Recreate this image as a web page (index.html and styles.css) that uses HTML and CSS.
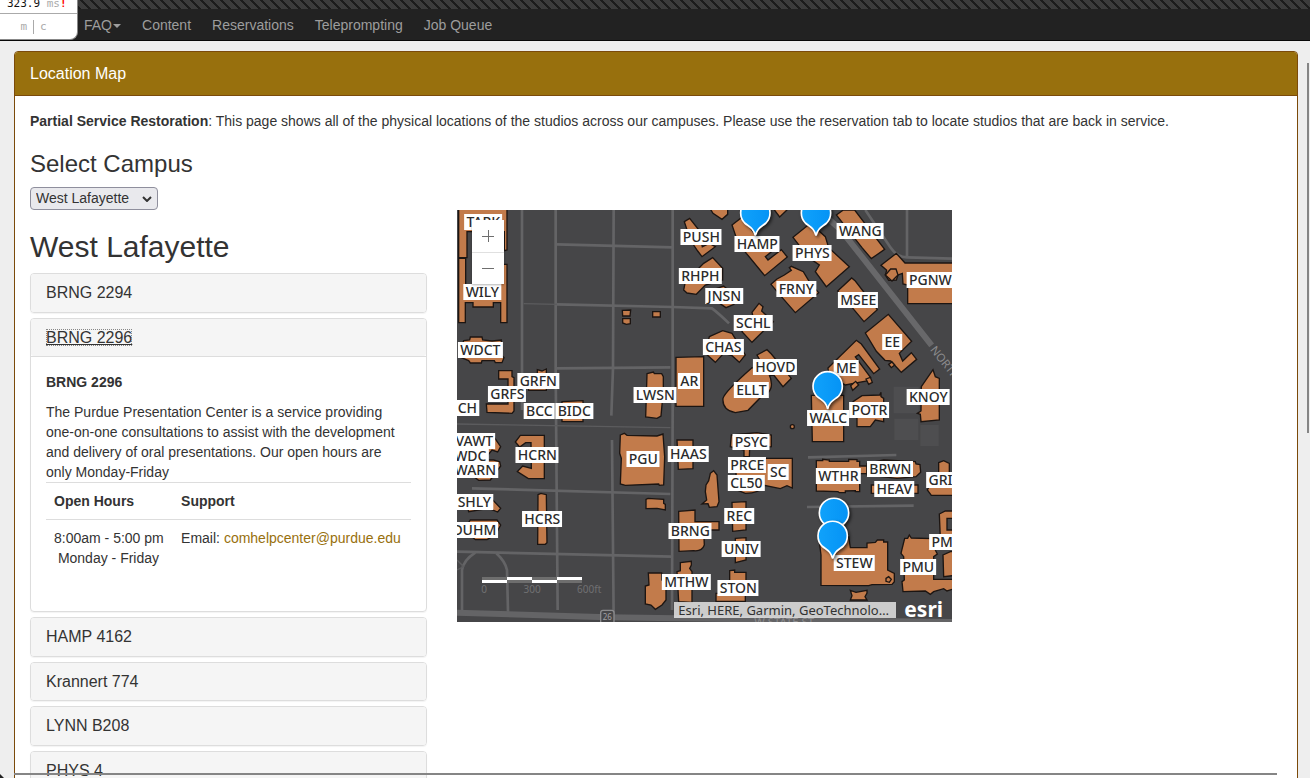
FILE: index.html
```html
<!DOCTYPE html>
<html lang="en">
<head>
<meta charset="utf-8">
<title>Location Map</title>
<link rel="stylesheet" href="styles.css">
</head>
<body>
<header class="topbar">
  <div class="stripes"></div>
  <nav class="nav">
    <a class="dropdown" href="#">FAQ<span class="caret"></span></a>
    <a href="#">Content</a>
    <a href="#">Reservations</a>
    <a href="#">Teleprompting</a>
    <a href="#">Job Queue</a>
  </nav>
  <div class="profiler">
    <div class="timing">323.9 <span class="unit">ms</span><b>!</b></div>
    <div class="toggles"><span>m</span><span class="sep"></span><span>c</span></div>
  </div>
</header>

<main class="panel">
  <h1 class="panel-title">Location Map</h1>
  <div class="panel-body">
    <p><strong>Partial Service Restoration</strong>: This page shows all of the physical locations of the studios across our campuses. Please use the reservation tab to locate studios that are back in service.</p>
    <h3><label for="campus">Select Campus</label></h3>
    <div class="campus-box">
      <select id="campus" class="campus"><option>West Lafayette</option></select>
      <svg class="chevron" viewBox="0 0 10 6"><path d="M1 1L5 5L9 1"/></svg>
    </div>
    <div class="columns">
      <section class="studios">
        <h2>West Lafayette</h2>
        <div class="card"><h4><a href="#">BRNG 2294</a></h4></div>
        <div class="card">
          <h4><a class="active" href="#">BRNG 2296</a></h4>
          <div class="card-body">
            <p><strong>BRNG 2296</strong></p>
            <div>The Purdue Presentation Center is a service providing one-on-one consultations to assist with the development and delivery of oral presentations. Our open hours are<br>only Monday-Friday</div>
            <table class="hours">
              <thead><tr><th>Open Hours</th><th>Support</th></tr></thead>
              <tbody><tr><td>8:00am - 5:00 pm<br>&nbsp;Monday - Friday</td><td>Email: <a href="#">comhelpcenter@purdue.edu</a></td></tr></tbody>
            </table>
          </div>
        </div>
        <div class="card"><h4><a href="#">HAMP 4162</a></h4></div>
        <div class="card"><h4><a href="#">Krannert 774</a></h4></div>
        <div class="card"><h4><a href="#">LYNN B208</a></h4></div>
        <div class="card"><h4><a href="#">PHYS 4</a></h4></div>
      </section>

      <section class="map" aria-label="Campus map">
        <svg class="layer" viewBox="0 0 1485 1236">
          <g class="roads">
            <path d="M195 0V600M296 0V480L302 1200M470 0L468 475L463 617M465 690L470 1225M647 0V600L645 1200"/>
            <path d="M300 103L647 112M300 283L647 291L765 295Q785 310 816 340M300 475L640 472"/>
            <path class="thin" d="M200 281L300 283M0 642L640 653"/>
            <path d="M45 835L640 852M0 1025L645 1040"/>
            <path d="M15 1200V1080Q20 1050 55 1028M153 1205L150 1080Q145 1055 118 1030"/>
            <path class="thin" d="M0 1050L20 1070L0 1080"/>
            <path d="M1350 0V138M1225 0L1300 112Q1320 142 1350 142L1485 146M1053 742L1318 735M1050 891L1370 887"/>
            <path class="main" d="M0 1208L450 1222L1485 1236"/>
            <path class="avenue" d="M1112 25L1150 58L1424 406"/>
          </g>
          <g class="blocks"><path d="M1310 530H1385V610H1310ZM1390 645H1445V708H1390ZM1312 626H1384V690H1312Z"/></g>
          <g class="buildings">
            <g transform="translate(0 -15)">
              <path d="M5 12H150V135L142 137V80H30V158H5ZM5 160H26V240H128V178H150V353H131V293H109V306H48V293H25V353H5Z"/>
              <path d="M20 407L38 405L40 396H75L77 405L105 408L133 405V450L141 458L135 473H115L112 467H75L73 474H40L35 467L5 455Z"/>
              <path d="M125 497H165V515L171 518V618L165 625L90 622L88 597H153V522H125Z"/>
              <path d="M241 494L255 498L268 492V556H215V520H241Z"/>
              <path d="M315 590L378 587V650H315Z"/>
              <path d="M496 316L521 315L519 333H497ZM497 341H520V356L508 358L497 354ZM587 320H610V336H587Z"/>
              <path d="M570 506L589 501L592 506H614L619 515V555L612 633L600 640L566 636Z"/>
              <path d="M657 457L740 455V604H657Z"/>
              <path d="M682 50L698 40L724 73L736 125L757 115L775 125L735 155L722 138L700 105Z"/>
              <path d="M685 230L740 175L767 158L797 190V225L745 240L718 268L690 264L680 255Z"/>
              <path d="M760 12L768 25L795 43L812 28V12ZM950 12L968 36L993 12Z"/>
            </g>
            <g transform="translate(735 -15)">
              <path d="M90 60L122 35L160 90L215 135L190 155L198 165L238 134L256 156L188 212L133 145L107 110Z"/>
              <path d="M273 97L325 55L370 95L380 128L442 185L373 245L340 200L352 180L320 158Z"/>
              <path d="M403 30L424 15H458L548 133L508 161L480 128Z"/>
              <path d="M537 181L583 145L609 174H760V296H617V240L603 237L601 205L588 210L583 225L560 226L550 210L554 196Z"/>
              <path d="M550 210L566 192H582L588 210L570 228Z"/>
              <path d="M207 238L225 222L247 210L268 196L262 188L268 184L304 200L325 235L350 263L280 323L240 277Z"/>
              <path d="M45 250L65 243L96 270V298L72 308L45 290Z"/>
              <path d="M407 258L449 219L460 228L526 314L486 350L440 295Z"/>
              <path d="M120 380L153 335L150 322L171 295L183 305L179 318L214 350L182 380L150 412Z"/>
              <path d="M22 395L62 377L90 385L130 450L112 472L90 452L65 445L40 472L10 445Z"/>
              <path d="M490 384L559 328L629 409L592 445L602 468L628 443L644 463L598 502L566 468L549 466L523 439Z"/>
              <path d="M560 478L570 471L578 480L568 488Z"/>
              <path d="M378 489L463 406L478 417L533 492L515 506L470 449L460 456L506 518L495 528L430 540L380 510Z"/>
              <path d="M446 542L461 529L470 540L452 556ZM492 522L505 517L511 532L500 538Z"/>
              <path d="M165 450L195 434L208 447L268 520L243 545L215 510L200 512Z"/>
              <path d="M63 580Q68 560 150 488L200 505Q225 560 175 578L138 616L100 623Q60 615 63 580Z"/>
              <path d="M328 571H425V710H331Z"/>
              <path d="M453 590L480 572L533 570L537 562V575L545 580V650L520 645L505 665H465L465 640L447 625Z"/>
              <path d="M658 545L693 494L700 515L712 520V645L657 650L655 628L646 625L657 618Z"/>
            </g>
            <g transform="translate(0 600)">
              <path d="M75 72H105L131 110L122 126L105 120L80 150H110L128 155L131 168L100 210L65 211L10 170V90Z"/>
              <path d="M190 76H262V206H214L181 185L197 168L223 175L222 98H206L188 111L175 96Z"/>
              <path d="M243 254L252 250L268 254L270 398L265 403H242Z"/>
              <path d="M25 262H100L131 295L122 306L95 295L35 305ZM40 330H120L131 345L115 375L90 389H55L20 360Z"/>
              <path d="M490 75L502 70L510 76L600 78L618 72L623 140L620 225L607 226L605 222L505 226L490 222L493 145L488 130Z"/>
              <path d="M567 268L573 265L620 268V280L625 283V300L600 295L567 296Z"/>
              <path d="M660 90H708V176L664 178Z"/>
              <path d="M665 304L714 300V335H786V360H740L742 405Q735 425 710 422L666 424Z"/>
              <path d="M574 489H614V510L627 520V570L615 585L595 598L582 585L565 582V528L576 525Z"/>
              <path d="M670 458L703 454V465L698 475L705 485V577L665 575L660 485L670 482Z"/>
            </g>
            <g transform="translate(735 600)">
              <path d="M12 225L20 212L25 190L35 182L45 195L51 275L45 290L22 292L18 281L0 282L14 270L10 245Z"/>
              <path d="M88 75L165 68L208 75V110L143 115L142 140H126V120L85 110Z"/>
              <path d="M100 155H190V145H271V234L255 227L235 236L186 226Q175 250 130 250L105 240Z"/>
              <path d="M90 277L132 275V360L92 364ZM100 385L132 383V450L100 458ZM83 482L98 480V487H132V545H130V574H42V550H83Z"/>
              <path d="M343 152H362V148L382 150V154H440V148L465 149V154H473V168H495V191H473V245H460V242L430 243V248H412L408 245L343 243Z"/>
              <path d="M495 160L545 150L640 155L642 162L654 164L656 187L642 200L585 205L495 195ZM508 225H648V250H508Z"/>
              <path d="M710 158L725 152L742 160V190H770V256H688L676 240L690 215L710 205Z"/>
              <path d="M357 435L350 380H440L445 413H495V399L520 397L526 390H545V396H557V480L577 490V515L570 523L510 524L500 527L357 526Z"/>
              <path d="M445 541L462 547L495 541V549L489 560L495 570L445 570L450 557Z"/>
              <path d="M608 385H617L622 375L628 384L693 386L700 420L706 432L695 440V508H760V535L735 543L725 536L695 545L685 553L670 543L603 545L600 515L607 510L605 440L597 430Z"/>
              <path d="M712 312L730 303H770V325H735V360H765V385H715ZM723 435L745 425H770V495L725 500Z"/>
              <circle cx="271" cy="50" r="6"/>
              <path d="M552 505L560 500L568 508L562 517L552 514Z"/>
            </g>
          </g>
          <rect class="shield" x="431" y="1201" width="40" height="40" rx="7"/>
          <text class="road-name" x="437" y="1230">26</text>
          <text class="road-name large" transform="translate(1418 420) rotate(51)">NORTHWESTERN</text>
          <text class="road-name large" x="892" y="1247">W STATE ST</text>
          <path fill="#6e6e6e" d="M75 1101H375V1119H75Z"/>
          <path fill="#fff" d="M75 1110H150V1119H75ZM150 1101H225V1110H150ZM225 1110H300V1119H225ZM300 1101H375V1110H300Z"/>
        </svg>
        <div class="labels">
          <span style="left:26px;top:12px">TARK</span><span style="left:25px;top:82px">WILY</span><span style="left:23px;top:140px">WDCT</span><span style="left:81px;top:171px">GRFN</span><span style="left:50px;top:184px">GRFS</span><span style="left:10px;top:198px">CH</span><span style="left:82px;top:201px">BCC</span><span style="left:117px;top:201px">BIDC</span><span style="left:198px;top:185px">LWSN</span><span style="left:232px;top:171px">AR</span>
          <span style="left:244px;top:27px">PUSH</span><span style="left:243px;top:66px">RHPH</span><span style="left:267px;top:86px">JNSN</span><span style="left:296px;top:113px">SCHL</span><span style="left:266px;top:137px">CHAS</span><span style="left:318px;top:157px">HOVD</span><span style="left:294px;top:180px">ELLT</span><span style="left:300px;top:34px">HAMP</span><span style="left:355px;top:43px">PHYS</span><span style="left:403px;top:21px">WANG</span><span style="left:473px;top:70px">PGNW</span><span style="left:339px;top:79px">FRNY</span><span style="left:401px;top:90px">MSEE</span><span style="left:435px;top:132px">EE</span><span style="left:389px;top:158px">ME</span><span style="left:471px;top:187px">KNOY</span><span style="left:371px;top:208px">WALC</span><span style="left:412px;top:200px">POTR</span>
          <span style="left:294px;top:232px">PSYC</span><span style="left:290px;top:255px">PRCE</span><span style="left:321px;top:262px">SC</span><span style="left:289px;top:273px">CL50</span><span style="left:381px;top:266px">WTHR</span><span style="left:433px;top:259px">BRWN</span><span style="left:437px;top:279px">HEAV</span><span style="left:487px;top:270px">GRIS</span><span style="left:282px;top:306px">REC</span><span style="left:284px;top:339px">UNIV</span><span style="left:233px;top:321px">BRNG</span><span style="left:229px;top:372px">MTHW</span><span style="left:281px;top:378px">STON</span><span style="left:397px;top:353px">STEW</span><span style="left:461px;top:357px">PMU</span><span style="left:490px;top:332px">PMU</span>
          <span style="left:186px;top:249px">PGU</span><span style="left:231px;top:244px">HAAS</span><span style="left:80px;top:245px">HCRN</span><span style="left:85px;top:309px">HCRS</span><span style="left:17px;top:231px">VAWT</span><span style="left:13px;top:246px">WDC</span><span style="left:18px;top:260px">WARN</span><span style="left:17px;top:292px">SHLY</span><span style="left:17px;top:320px">DUHM</span>
        </div>
        <svg class="layer pins" viewBox="0 0 1485 1236">
          <defs>
            <linearGradient id="pinfill" x1="0" y1="0" x2="1" y2="0"><stop offset="0" stop-color="#10a2fb"/><stop offset="1" stop-color="#0593f5"/></linearGradient>
            <path id="pin" d="M0 69C-6 45-18 43-32 31A44 44 0 1 1 32 31C18 43 6 45 0 69Z"/>
          </defs>
          <use href="#pin" x="895" y="8"/><use href="#pin" x="1077" y="8"/><use href="#pin" x="1112" y="528"/><use href="#pin" x="1131" y="908"/><use href="#pin" x="1127" y="977"/>
        </svg>
        <div class="zoom"><button type="button" aria-label="Zoom in"><svg viewBox="0 0 12 12"><path d="M0 6.5H12M6.5 0V12"/></svg></button><button type="button" aria-label="Zoom out"><svg viewBox="0 0 12 12"><path d="M0 6.5H12"/></svg></button></div>
        <div class="scale-labels"><span>0</span><span>300</span><span>600ft</span></div>
        <div class="credits"><span class="sources">Esri, HERE, Garmin, GeoTechnologies, Inc.</span><a class="esri" href="#">esri</a></div>
      </section>
    </div>
  </div>
</main>
<div class="scroll-y"></div>
<div class="scroll-x"></div>
</body>
</html>
```
FILE: styles.css
```css
* { box-sizing: border-box; }
body {
  margin: 0;
  height: 100vh;
  overflow: hidden;
  background: #eee;
  color: #333;
  font: 14px/20px "Liberation Sans", Arial, sans-serif;
}
a { color: #98700d; text-decoration: none; }
p { margin: 0 0 10px; }
h1, h2, h3, h4 { margin: 0; font-weight: 400; line-height: 1.1; }

/* top bar */
.topbar { position: relative; background: #222; border-bottom: 1px solid #080808; }
.stripes {
  height: 9px;
  background: linear-gradient(45deg, #1c1c1c 0 12%, #3c3c3c 12% 50%, #1c1c1c 50% 62%, #3c3c3c 62%) 0 0 / 10px 10px;
}
.nav { display: flex; gap: 1px; height: 31px; align-items: center; padding-left: 74px; }
.nav a { padding: 0 10px; color: #9d9d9d; }
.caret { display: inline-block; margin-left: 1px; vertical-align: middle; border: 4px solid transparent; border-top-color: currentColor; border-bottom: 0; }
.profiler {
  position: absolute; left: 0; top: 0; width: 78px; height: 40px;
  overflow: hidden;
  background: #fff;
  border: solid #888; border-width: 0 1px 1px 0; border-radius: 0 0 8px 0;
  font: 11px/13px "DejaVu Sans Mono", monospace;
}
.timing { height: 14px; padding-left: 7px; border-bottom: 1px solid #aaa; color: #111; line-height: 7px; white-space: nowrap; }
.unit { color: #aaa; }
.timing b { color: #f00; }
.toggles { display: flex; justify-content: center; align-items: center; height: 25px; gap: 6px; padding-right: 10px; color: #aaa; }
.sep { width: 1px; height: 14px; background: #aaa; }

/* main panel */
.panel { margin: 10px 12px 0 14px; background: #fff; border: 1px solid #7b4a0a; border-radius: 4px; }
.panel-title { padding: 13px 15px 12px; border-bottom: 1px solid #7b4a0a; border-radius: 3px 3px 0 0; background: #98700d; color: #fff; font-size: 16px; }
.panel-body { padding: 15px; }
h3 { margin: 20px 0 10px; font-size: 24px; }
.campus-box { position: relative; width: 128px; }
.campus { display: block; width: 100%; height: 23px; padding: 0 5px; appearance: none; border: 1px solid #8f8f9d; border-radius: 4px; background: #e9e9ed; color: #333; font: inherit; }
.chevron { position: absolute; right: 6px; top: 9px; width: 10px; height: 6px; fill: none; stroke: #333; stroke-width: 2; pointer-events: none; }
.columns { display: flex; gap: 30px; align-items: flex-start; }
.studios { flex: 0 0 calc((100% - 60px) / 3); }
h2 { margin: 20px 0 10px; font-size: 30px; }
.card { margin-bottom: 5px; border: 1px solid #ddd; border-radius: 4px; box-shadow: 0 1px 1px rgba(0, 0, 0, .05); }
.card h4 { padding: 10px 15px; border-radius: 3px; background: #f5f5f5; font-size: 16px; }
.card h4 a { color: #333; }
.card h4 .active { text-decoration: underline; outline: 1px dotted #888; outline-offset: -1px; }
.card-body { padding: 15px; border-top: 1px solid #ddd; }
.hours { width: 100%; margin-bottom: 20px; border-collapse: collapse; }
.hours th, .hours td { padding: 8px; border-top: 1px solid #ddd; text-align: left; vertical-align: top; }
.hours td:last-child { white-space: nowrap; }

/* map */
.map { position: relative; flex: 0 1 495px; aspect-ratio: 495 / 412; overflow: hidden; background: #464648; }
.layer { position: absolute; inset: 0; width: 100%; height: 100%; }
.roads path { fill: none; stroke: #646466; stroke-width: 8; }
.roads .thin { stroke-width: 4; stroke: #5c5c5e; }
.roads .main { stroke-width: 18; }
.roads .avenue { stroke-width: 18; stroke: #68686a; }
.blocks path { fill: #4e4e50; }
.buildings { fill: #c27b4b; stroke: #1c1512; stroke-width: 4; }
.shield { fill: #464648; stroke: #8c8c8e; stroke-width: 4; }
.road-name { fill: #a0a0a2; font: 24px "Noto Sans", sans-serif; }
.road-name.large { fill: #8c8c8e; font-size: 34px; }
.labels span {
  position: absolute; padding: 0 2px;
  transform: translate(-50%, -50%);
  background: #fff; color: #2b2b2b;
  font: 500 14px/16px "Noto Sans", sans-serif;
}
.pins use { fill: url(#pinfill); stroke: #fff; stroke-width: 5; filter: drop-shadow(5px 5px 5px rgba(0, 0, 0, .6)); }
.zoom { position: absolute; left: 15px; top: 10px; width: 32px; background: #fff; box-shadow: 0 1px 2px rgba(0, 0, 0, .3); }
.zoom button { display: flex; width: 32px; height: 32px; padding: 0; align-items: center; justify-content: center; border: 0; background: #fff; }
.zoom button + button { border-top: 1px solid #e0e0e0; }
.zoom svg { width: 12px; height: 12px; stroke: #6e6e6e; }
.scale-labels { position: absolute; left: 24px; top: 372px; display: flex; width: 120px; justify-content: space-between; color: #707072; font: 10px/14px "Noto Sans", sans-serif; }
.credits { position: absolute; left: 217px; right: 0; bottom: 0; display: flex; height: 24px; padding: 4px 0; }
.sources { width: 222px; height: 16px; padding: 0 4px; overflow: hidden; background: rgba(238, 238, 238, .8); color: #323232; font: 13px/16px "Noto Sans", sans-serif; text-overflow: ellipsis; white-space: nowrap; }
.esri { padding-left: 8px; color: #fff; font: 700 21px/14px "Noto Sans", sans-serif; }

/* overlay scroll bars */
.scroll-y { position: fixed; right: 1px; top: 63px; width: 2px; height: 370px; background: #858585; }
.scroll-x { position: fixed; left: 14px; right: 33px; bottom: 3px; height: 2px; background: #858585; }
body::after { content: ""; position: fixed; left: 0; bottom: 0; border: 2px solid #222; border-top-color: transparent; border-right-color: transparent; }
```
